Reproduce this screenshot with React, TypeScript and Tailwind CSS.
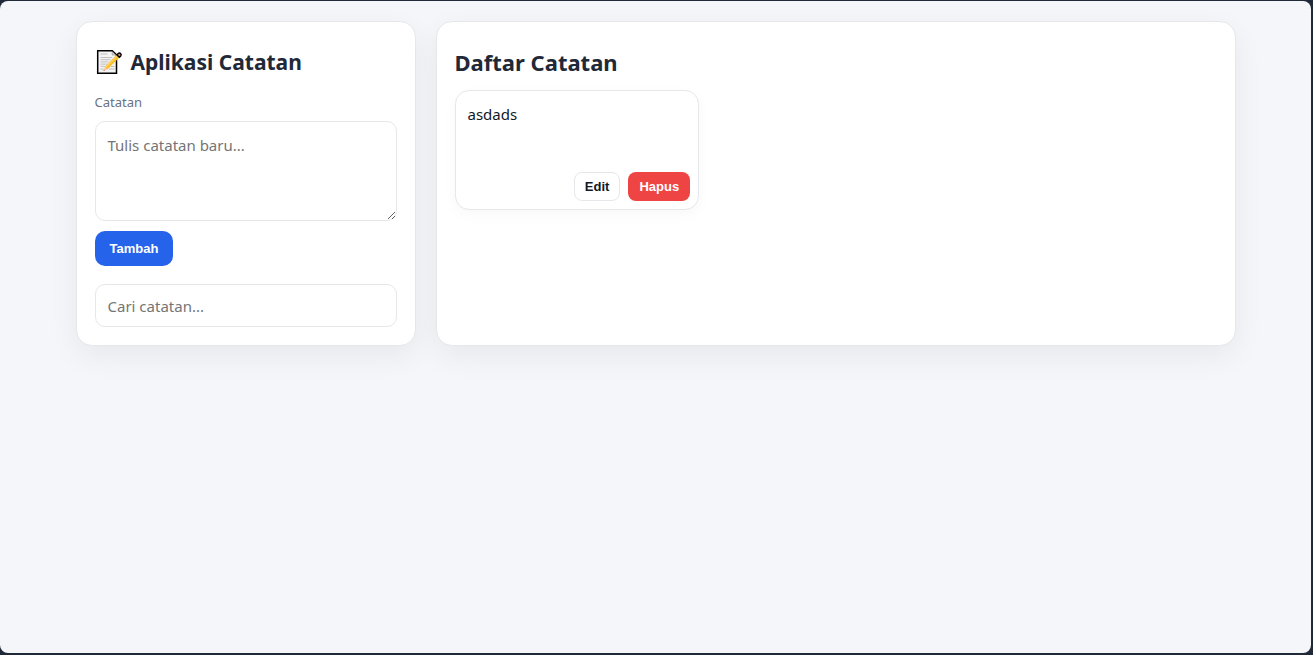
import { useState } from "react";

function MemoIcon() {
  return (
    <svg viewBox="0 0 28 28" className="h-7 w-7 shrink-0" aria-hidden="true">
      <path d="M2.7 2.7h14.6l4.2 4.2v18.4H2.7z" fill="#f3f3f3" stroke="#000" strokeWidth="1.5" />
      <path d="M17.2 3.4v3.6h3.6" fill="#d8d8d8" stroke="#777" strokeWidth="0.5" />
      <path
        d="M5.5 6h7M5.5 9.5h11.5M5.5 11.7h10M5.5 13.9h8M5.5 16.1h6.5M5.5 18.3h4.5M5.5 21h3M16 18.5h3.5M14 21h5.5"
        stroke="#bfbfbf"
        strokeWidth="1"
      />
      <path d="M8.6 22.8l1.2-3.8 2.6 2.5z" fill="#f6c9a5" />
      <path d="M9.8 19l11.8-12.2 2.8 2.6-12 12.1z" fill="#fbc02d" />
      <path d="M10.7 19.6l11.6-12" stroke="#ffdc7a" strokeWidth="0.9" />
      <path d="M8.4 23l.5-1.6 1.1 1z" fill="#d9534f" />
      <path
        d="M22 6.9l1.2-1.3c1.5-1.4 4 .5 2.5 2.4l-1.3 1.3z"
        fill="#c98a78"
        stroke="#000"
        strokeWidth="1.4"
      />
    </svg>
  );
}

const panel =
  "rounded-2xl border border-[#e5e7eb] bg-white p-[18px] shadow-[0_10px_30px_rgba(0,0,0,0.06)]";
const field =
  "w-full rounded-[10px] border border-[#e5e7eb] bg-white px-3 text-[15px] text-[#111827] placeholder:text-[#757575]";

export default function App() {
  const [notes, setNotes] = useState<string[]>(["asdads"]);
  const [draft, setDraft] = useState("");
  const [query, setQuery] = useState("");

  const add = () => {
    if (!draft.trim()) return;
    setNotes([...notes, draft.trim()]);
    setDraft("");
  };
  const edit = (index: number) => {
    setDraft(notes[index]);
    setNotes(notes.filter((_, i) => i !== index));
  };

  return (
    <div className="flex min-h-screen bg-[#1f2937] pt-px pr-0.5 pb-0.5 font-['Noto_Sans',sans-serif] text-[#111827]">
      <div className="flex-1 rounded-lg bg-[#f4f6fa] p-5">
        <main className="mx-auto grid max-w-[1160px] grid-cols-1 gap-5 md:grid-cols-[340px_1fr]">
          <section className={panel}>
            <h1 className="mt-1.5 flex items-center gap-2 text-[21px] leading-8 font-bold text-[#1f2937]">
              <MemoIcon />
              Aplikasi Catatan
            </h1>
            <label htmlFor="note" className="mt-3.5 block text-[13px] leading-5 text-[#6b7280]">
              Catatan
            </label>
            <textarea
              id="note"
              value={draft}
              onChange={(e) => setDraft(e.target.value)}
              placeholder="Tulis catatan baru..."
              className={`${field} mt-[9px] block h-[100px] resize-y py-3 leading-[22px]`}
            />
            <button
              type="button"
              onClick={add}
              className="mt-2.5 block h-[35px] rounded-[10px] bg-[#2563eb] px-[15px] font-['Liberation_Sans',sans-serif] text-[13px] font-bold text-white"
            >
              Tambah
            </button>
            <input
              type="search"
              aria-label="Cari catatan"
              value={query}
              onChange={(e) => setQuery(e.target.value)}
              placeholder="Cari catatan..."
              className={`${field} mt-[18px] block h-[43px]`}
            />
          </section>

          <section className={panel}>
            <h2 className="mt-1.5 text-[22px] leading-8 font-bold text-[#1f2937]">Daftar Catatan</h2>
            <ul className="mt-3 grid grid-cols-[repeat(auto-fill,minmax(220px,1fr))] gap-3.5">
              {notes.map((text, i) =>
                text.toLowerCase().includes(query.toLowerCase()) ? (
                  <li
                    key={i}
                    className="flex min-h-[120px] flex-col justify-between rounded-[14px] border border-[#e5e7eb] bg-white p-2 shadow-[0_4px_14px_rgba(0,0,0,0.03)]"
                  >
                    <p className="px-1 pt-[3px] text-[15px] leading-6 break-words">{text}</p>
                    <div className="flex justify-end gap-2 font-['Liberation_Sans',sans-serif] text-[13px] font-bold">
                      <button
                        type="button"
                        onClick={() => edit(i)}
                        className="h-[29px] rounded-lg border border-[#e5e7eb] bg-white px-2.5"
                      >
                        Edit
                      </button>
                      <button
                        type="button"
                        onClick={() => setNotes(notes.filter((_, j) => j !== i))}
                        className="h-[29px] rounded-lg bg-[#ef4444] px-[11px] text-white"
                      >
                        Hapus
                      </button>
                    </div>
                  </li>
                ) : null,
              )}
            </ul>
          </section>
        </main>
      </div>
    </div>
  );
}
